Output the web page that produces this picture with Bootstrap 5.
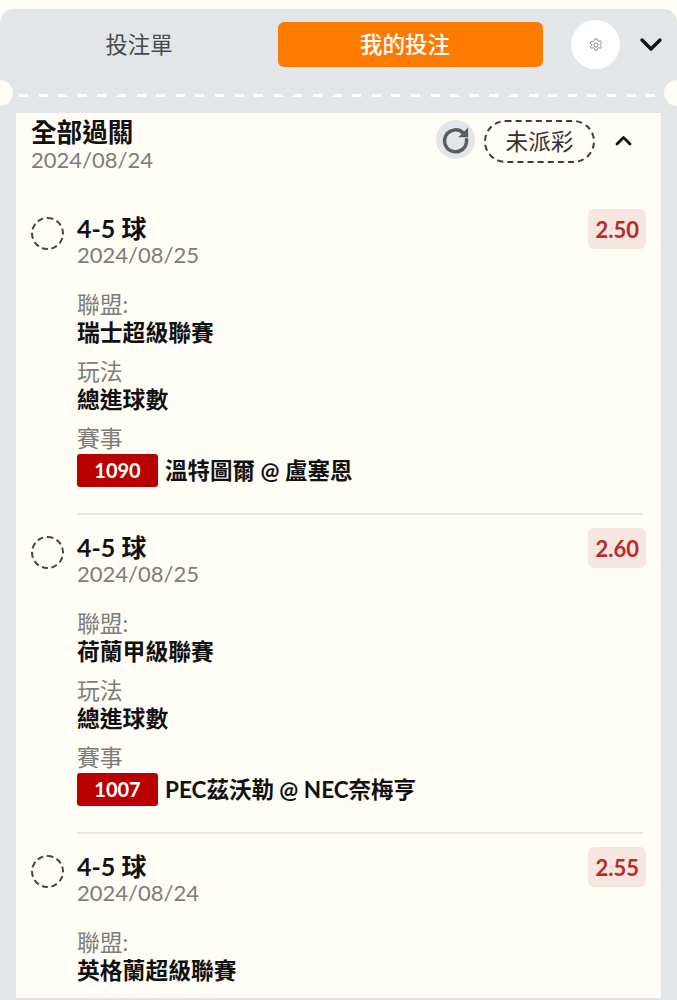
<!DOCTYPE html>
<html lang="zh-Hant">
<head>
  <meta charset="UTF-8">
  <title>我的投注</title>
  <link href="https://cdn.jsdelivr.net/npm/bootstrap@5.3.0/dist/css/bootstrap.min.css" rel="stylesheet">
  <style>
    html, body { height: 1000px; overflow: hidden; }
    body { background: #fffdf6; font-family: Lato, "Noto Sans CJK TC", sans-serif; padding-top: 9px; color: #111; }
    .slip { background: #e3e6e9; border-radius: 14px 14px 0 0; height: 991px; padding: 0 16px; position: relative; overflow: hidden; }
    .slip-head { height: 74px; margin: 0 -16px; padding-top: 13px; }
    .tab-off { width: 278px; height: 45px; font-size: 22.4px; line-height: 45px; color: #4a4a4a; text-align: center; }
    .tab-on { width: 265px; height: 45px; padding-right: 11px; background: #ff7a00; color: #fff; border-radius: 6px; font-size: 22.6px; line-height: 45px; text-align: center; font-weight: 500; }
    .gear-btn { width: 49px; height: 49px; margin: -2px 0 0 28px; background: #fff; border-radius: 50%; }
    .head-chev { margin: 10px 0 0 19px; }
    .tear { height: 30px; margin: 0 -16px; position: relative; }
    .tear-line { position: absolute; left: 19px; right: 19px; top: 11px; height: 3px; background: repeating-linear-gradient(90deg, #fff 0, #fff 9px, transparent 9px, transparent 19.6px); }
    .notch { position: absolute; top: -3px; width: 26px; height: 26px; background: #fffdf6; border-radius: 50%; }
    .notch-l { left: -13px; }
    .notch-r { right: -13px; }
    .ticket { background: #fffdf6; height: 885px; padding: 4px 16px 0 15px; }
    .ticket-top { margin-bottom: 40px; }
    .t-title { font-size: 25.6px; line-height: 30px; font-weight: 700; }
    .t-date { font-size: 22px; line-height: 26px; color: #7d7d7a; }
    .ticket-tools { margin-top: 3px; }
    .redo { width: 39px; height: 39px; background: #e3e6e9; border-radius: 50%; }
    .status { width: 111px; height: 43px; border: 2px dashed #3c3c3c; border-radius: 22px; font-size: 22.6px; line-height: 39px; text-align: center; color: #333; margin: 0 9px 0 9px; }
    .up-chev { margin: 12px 13px 0 11px; }
    .leg { padding-left: 46px; position: relative; }
    .pick-dot { position: absolute; left: 0; top: 4px; width: 33px; height: 33px; border: 2px dashed #444; border-radius: 50%; }
    .pick { font-size: 25px; line-height: 30px; font-weight: 700; }
    .leg .t-date { line-height: 24px; }
    .odds { background: #f8e6e0; color: #b92b27; font-size: 22px; font-weight: 700; height: 40px; line-height: 41px; padding: 0 7px; border-radius: 6px; margin: -4px -1px 0 0; }
    .lbl { font-size: 22.8px; line-height: 28px; color: #7d7d7a; margin-top: 11px; }
    .lbl-first { margin-top: 23px; }
    .val { font-size: 22.8px; line-height: 28px; font-weight: 700; }
    .match-row { margin-top: 2px; }
    .match-no { width: 81px; height: 33px; line-height: 33px; background: #b90000; color: #fff; border-radius: 3px; font-size: 20px; font-weight: 700; text-align: center; }
    .match { font-size: 22.5px; font-weight: 700; line-height: 33px; margin-left: -1px; }
    .leg-rule { height: 2px; background: #e6e6e2; margin: 26px 2px 17px 0; }
  </style>
</head>
<body>
<div class="slip">
  <div class="slip-head d-flex align-items-start">
    <div class="tab-off">投注單</div>
    <div class="tab-on">我的投注</div>
    <div class="gear-btn d-flex align-items-center justify-content-center">
      <svg width="14" height="14" viewBox="0 0 16 16" fill="none" stroke="#888" stroke-width="1.1"><circle cx="8" cy="8" r="2.4"/><path d="M6.8 1h2.4l.4 2 1.6.9 1.9-.7 1.2 2.1-1.5 1.3v1.8l1.5 1.3-1.2 2.1-1.9-.7-1.6.9-.4 2H6.8l-.4-2-1.6-.9-1.9.7-1.2-2.1 1.5-1.3V7.1L1.3 5.8l1.2-2.1 1.9.7L6 3z"/></svg>
    </div>
    <svg class="head-chev" width="24" height="24" viewBox="0 0 24 24" fill="none" stroke="#111" stroke-width="3.4" stroke-linecap="round" stroke-linejoin="round"><path d="M3 8l9 9 9-9"/></svg>
  </div>
  <div class="tear">
    <div class="tear-line"></div>
    <div class="notch notch-l"></div>
    <div class="notch notch-r"></div>
  </div>
  <div class="ticket">
    <div class="ticket-top d-flex justify-content-between align-items-start">
      <div>
        <div class="t-title">全部過關</div>
        <div class="t-date">2024/08/24</div>
      </div>
      <div class="ticket-tools d-flex align-items-start">
        <div class="redo d-flex align-items-center justify-content-center">
          <svg width="33" height="33" viewBox="0 0 30 30" fill="none"><path d="M22.5 9.5A10 10 0 1 0 25 15" stroke="#5a5c5e" stroke-width="3.2" stroke-linecap="round"/><path d="M26.5 4v9h-9z" fill="#5a5c5e"/></svg>
        </div>
        <div class="status">未派彩</div>
        <svg class="up-chev" width="17" height="17" viewBox="0 0 17 17" fill="none" stroke="#111" stroke-width="2.8" stroke-linecap="round" stroke-linejoin="round"><path d="M2 12l6.5-6.5L15 12"/></svg>
      </div>
    </div>

    <div class="leg">
      <div class="pick-dot"></div>
      <div class="d-flex justify-content-between align-items-start">
        <div>
          <div class="pick">4-5 球</div>
          <div class="t-date">2024/08/25</div>
        </div>
        <div class="odds">2.50</div>
      </div>
      <div class="lbl lbl-first">聯盟:</div>
      <div class="val">瑞士超級聯賽</div>
      <div class="lbl">玩法</div>
      <div class="val">總進球數</div>
      <div class="lbl">賽事</div>
      <div class="match-row d-flex gap-2">
        <div class="match-no">1090</div>
        <div class="match">溫特圖爾 @ 盧塞恩</div>
      </div>
      <div class="leg-rule"></div>
    </div>

    <div class="leg">
      <div class="pick-dot"></div>
      <div class="d-flex justify-content-between align-items-start">
        <div>
          <div class="pick">4-5 球</div>
          <div class="t-date">2024/08/25</div>
        </div>
        <div class="odds">2.60</div>
      </div>
      <div class="lbl lbl-first">聯盟:</div>
      <div class="val">荷蘭甲級聯賽</div>
      <div class="lbl">玩法</div>
      <div class="val">總進球數</div>
      <div class="lbl">賽事</div>
      <div class="match-row d-flex gap-2">
        <div class="match-no">1007</div>
        <div class="match">PEC茲沃勒 @ NEC奈梅亨</div>
      </div>
      <div class="leg-rule"></div>
    </div>

    <div class="leg">
      <div class="pick-dot"></div>
      <div class="d-flex justify-content-between align-items-start">
        <div>
          <div class="pick">4-5 球</div>
          <div class="t-date">2024/08/24</div>
        </div>
        <div class="odds">2.55</div>
      </div>
      <div class="lbl lbl-first">聯盟:</div>
      <div class="val">英格蘭超級聯賽</div>
    </div>
  </div>
</div>
<script src="https://cdn.jsdelivr.net/npm/bootstrap@5.3.0/dist/js/bootstrap.bundle.min.js"></script>
</body>
</html>
